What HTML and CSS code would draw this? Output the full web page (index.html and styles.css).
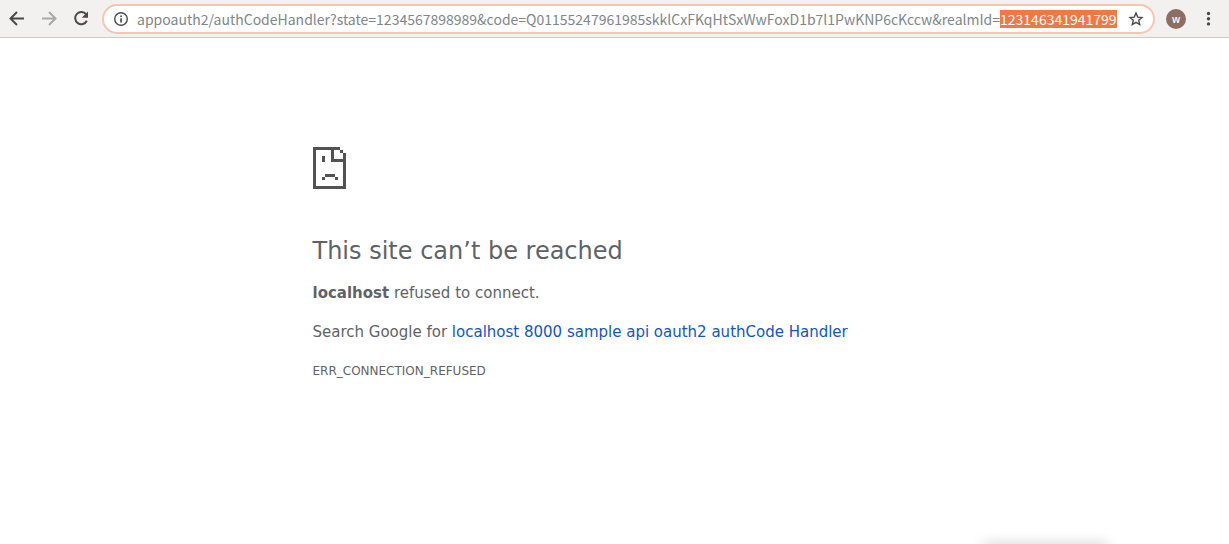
FILE: index.html
```
<!DOCTYPE html>
<html lang="en">
<head>
<meta charset="utf-8">
<title>This site can’t be reached</title>
<link rel="stylesheet" href="styles.css">
</head>
<body>
<header class="toolbar">
  <nav class="nav">
    <button class="icon-button" type="button" aria-label="Back">
      <svg width="18" height="18" viewBox="0 0 18 18" fill="none" stroke="currentColor" stroke-width="2"><path d="M16 8.5H3M9 2L2.5 8.5L9 15"/></svg>
    </button>
    <button class="icon-button" type="button" aria-label="Forward" disabled>
      <svg width="18" height="18" viewBox="0 0 18 18" fill="none" stroke="currentColor" stroke-width="2"><path d="M2 8.5H15M9 2L15.5 8.5L9 15"/></svg>
    </button>
    <button class="icon-button" type="button" aria-label="Reload">
      <svg width="18" height="18" viewBox="0 0 18 18"><path d="M14.2 4.5A6.1 6.1 0 1 0 14.8 10.7" fill="none" stroke="currentColor" stroke-width="2"/><path d="M16 1.5V7.7H9.8Z" fill="currentColor"/></svg>
    </button>
  </nav>
  <form class="omnibox">
    <button class="icon-button" type="button" aria-label="Site information">
      <svg width="16" height="16" viewBox="0 0 16 16"><circle cx="8" cy="8" r="6.3" fill="none" stroke="currentColor" stroke-width="1.4"/><path d="M7.2 4.4h1.7v1.7H7.2zM7.2 7.2h1.7v4.4H7.2z" fill="currentColor"/></svg>
    </button>
    <input class="url" type="text" aria-label="Address" spellcheck="false" autocomplete="off" value="appoauth2/authCodeHandler?state=1234567898989&amp;code=Q01155247961985skklCxFKqHtSxWwFoxD1b7l1PwKNP6cKccw&amp;realmId=123146341941799">
    <button class="icon-button" type="button" aria-label="Bookmark this page">
      <svg width="16" height="16" viewBox="0 0 16 16" fill="none" stroke="currentColor" stroke-width="1.4"><path d="M8 2.1L9.7 6.1L14 6.5L10.7 9.3L11.7 13.6L8 11.3L4.3 13.6L5.3 9.3L2 6.5L6.3 6.1Z"/></svg>
    </button>
  </form>
  <button class="avatar" type="button" aria-label="Profile">w</button>
  <button class="icon-button" type="button" aria-label="Menu">
    <svg width="6" height="16" viewBox="0 0 6 16" fill="currentColor"><circle cx="3.5" cy="2.5" r="1.7"/><circle cx="3.5" cy="7.7" r="1.7"/><circle cx="3.5" cy="12.9" r="1.7"/></svg>
  </button>
</header>
<main class="error">
  <svg class="error-icon" width="33" height="42" viewBox="0 0 33 42" fill="currentColor" shape-rendering="crispEdges" aria-hidden="true"><path d="M0 0H27V3H21V12H30V6H33V42H0ZM3 3V39H30V15H18V3ZM27 3H30V6H27ZM9 9H12V15H9ZM12 27H22V30H12ZM9 30H12V33H9ZM22 30H25V33H22Z" fill-rule="evenodd"/></svg>
  <h1 class="title">This site can’t be reached</h1>
  <p class="text"><strong>localhost</strong> refused to connect.</p>
  <p class="text">Search Google for <a class="link" href="#">localhost 8000 sample api oauth2 authCode Handler</a></p>
  <p class="code">ERR_CONNECTION_REFUSED</p>
</main>
<div class="popup-shadow"></div>
<script src="script.js"></script>
</body>
</html>
```
FILE: styles.css
```
* {
  box-sizing: border-box;
}

body {
  margin: 0;
  background: #fff;
  font-family: "DejaVu Sans", sans-serif;
  color: #5f6368;
}

.toolbar {
  display: flex;
  align-items: center;
  height: 38px;
  padding: 0 18px 0 8px;
  background: #f2f1f0;
  border-bottom: 1px solid #cbcac9;
}

.nav {
  display: flex;
  gap: 14px;
  margin-right: 12px;
}

.icon-button {
  display: flex;
  flex: none;
  padding: 0;
  border: 0;
  background: none;
  color: #4a4a4a;
}

.icon-button:disabled {
  color: #a9a8a7;
}

.omnibox {
  display: flex;
  flex: 1;
  align-items: center;
  gap: 8px;
  min-width: 0;
  height: 30px;
  padding: 0 9px;
  border: 2px solid #f7c6b1;
  border-radius: 15px;
  background: #fff;
}

.url {
  flex: 1;
  min-width: 0;
  padding: 0;
  border: 0;
  outline: 0;
  background: none;
  color: #80868b;
  font: 14px/18px "Noto Sans CJK SC", sans-serif;
}

.url::selection {
  background: #f07746;
  color: #fff;
}

.avatar {
  width: 20px;
  height: 20px;
  margin: 0 19px 0 11px;
  padding: 0;
  border: 0;
  border-radius: 50%;
  background: #8d6e63;
  color: #fff;
  font: 600 10px/18px "Open Sans", sans-serif;
}

.error {
  max-width: 604px;
  margin: 109px auto 0;
}

.error-icon {
  display: block;
  color: #535353;
}

.title {
  margin: 47px 0 15px;
  font-size: 24px;
  line-height: 30px;
  font-weight: 400;
}

.text {
  margin: 0 0 15px;
  font-size: 15px;
  line-height: 24px;
}

.link {
  color: #1155cc;
  text-decoration: none;
}

.code {
  margin: 0;
  font-size: 12px;
  line-height: 24px;
}

.popup-shadow {
  position: fixed;
  right: 121px;
  bottom: -10px;
  width: 124px;
  height: 10px;
  box-shadow: 0 0 14px rgba(0, 0, 0, 0.2);
}
```
FILE: script.js
```
const url = document.querySelector(".url");
url.focus();
url.setSelectionRange(url.value.lastIndexOf("=") + 1, url.value.length);
```
